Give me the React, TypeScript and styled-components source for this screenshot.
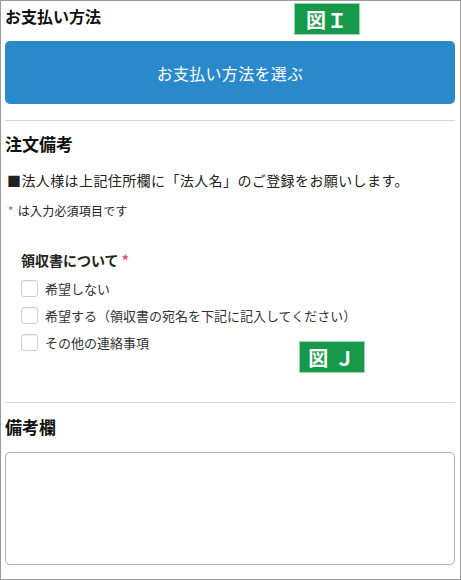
import React from "react";
import styled, { createGlobalStyle } from "styled-components";

const GlobalStyle = createGlobalStyle`
  html, body {
    margin: 0;
    padding: 0;
    background: #ffffff;
  }
  body {
    font-family: "Noto Sans CJK JP", "Noto Sans", sans-serif;
    color: #222;
  }
`;

const Frame = styled.div`
  position: relative;
  width: 461px;
  height: 580px;
  box-sizing: border-box;
  border: 1px solid #9a9a9a;
  padding: 0 5px 0 4px;
  display: flex;
  flex-direction: column;
  overflow: hidden;
`;

const Heading = styled.h2<{ $mt: number; $size?: number }>`
  margin: ${(p) => p.$mt}px 0 0 0;
  font-size: ${(p) => p.$size ?? 17}px;
  line-height: 24px;
  font-weight: 700;
  color: #111;
`;

const PayButton = styled.button`
  margin-top: 13px;
  height: 63px;
  width: 100%;
  border: none;
  border-radius: 5px;
  background: #2a89ca;
  color: #fff;
  font-family: inherit;
  font-size: 16px;
  letter-spacing: 0.3px;
  cursor: pointer;
`;

const Divider = styled.hr<{ $mt: number }>`
  margin: ${(p) => p.$mt}px 0 0 0;
  border: none;
  border-top: 1px solid #d4d4d4;
  height: 0;
`;

const Notice = styled.p`
  margin: 13px 0 0 0;
  font-size: 14px;
  line-height: 22px;
  letter-spacing: 0.4px;
  color: #222;
  padding-left: 2px;
`;

const RequiredNote = styled.p`
  margin: 11px 0 0 0;
  font-size: 12px;
  line-height: 18px;
  letter-spacing: 0.2px;
  color: #222;
  padding-left: 3px;
`;

const Mark = styled.span`
  color: #e0487a;
  margin-right: 4px;
`;

const FieldLabel = styled.div`
  margin-top: 30px;
  padding-left: 16px;
  font-size: 14px;
  line-height: 20px;
  font-weight: 700;
  color: #222;
`;

const OptionList = styled.div`
  margin-top: 5px;
  padding-left: 16px;
  display: flex;
  flex-direction: column;
`;

const OptionRow = styled.label`
  height: 27px;
  display: flex;
  align-items: center;
  gap: 7px;
  font-size: 13px;
  color: #333;
`;

const Box = styled.span`
  width: 17px;
  height: 17px;
  box-sizing: border-box;
  border: 1.5px solid #cfcfcf;
  border-radius: 3px;
  background: #fff;
  box-shadow: inset 0 1px 1px rgba(0, 0, 0, 0.06);
  flex-shrink: 0;
`;

const Memo = styled.textarea`
  margin-top: 13px;
  height: 113px;
  width: 100%;
  box-sizing: border-box;
  border: 1px solid #b0b0b0;
  border-radius: 5px;
  resize: none;
  font-family: inherit;
`;

const Badge = styled.div<{ $left: number; $top: number }>`
  position: absolute;
  left: ${(p) => p.$left}px;
  top: ${(p) => p.$top}px;
  width: 66px;
  height: 32px;
  box-sizing: border-box;
  background: #17994b;
  border: 1px solid #9fd3b0;
  color: #fff;
  font-size: 20px;
  font-weight: 700;
  display: flex;
  align-items: center;
  justify-content: center;
  letter-spacing: 1px;
`;

const options = [
  "希望しない",
  "希望する（領収書の宛名を下記に記入してください）",
  "その他の連絡事項",
];

const App = () => {
  return (
    <>
      <GlobalStyle />
      <Frame>
        <Heading $mt={3} $size={16}>お支払い方法</Heading>
        <PayButton>お支払い方法を選ぶ</PayButton>
        <Divider $mt={16} />

        <Heading $mt={11}>注文備考</Heading>
        <Notice>■法人様は上記住所欄に「法人名」のご登録をお願いします。</Notice>
        <RequiredNote>
          <Mark>*</Mark>は入力必須項目です
        </RequiredNote>

        <FieldLabel>
          領収書について <Mark>*</Mark>
        </FieldLabel>
        <OptionList>
          {options.map((o) => (
            <OptionRow key={o}>
              <Box />
              {o}
            </OptionRow>
          ))}
        </OptionList>
        <Divider $mt={46} />

        <Heading $mt={12}>備考欄</Heading>
        <Memo />

        <Badge $left={293} $top={2}>図Ｉ</Badge>
        <Badge $left={298} $top={340}>図 Ｊ</Badge>
      </Frame>
    </>
  );
};

export default App;
